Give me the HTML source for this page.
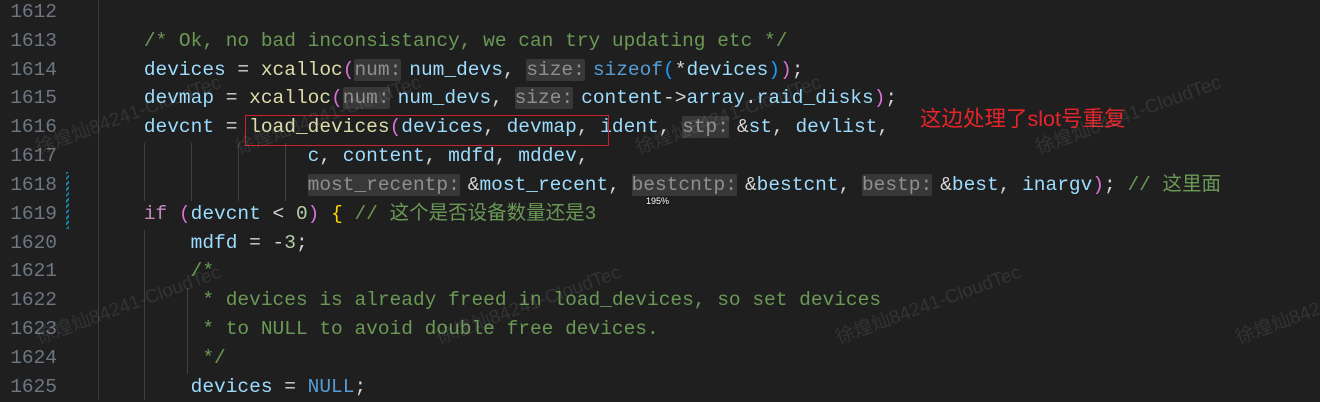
<!DOCTYPE html>
<html><head><meta charset="utf-8"><style>
body{margin:0;width:1320px;height:400px;background:#1f1f1f;overflow:hidden;position:relative;font-family:"Liberation Mono","Noto Sans CJK SC",monospace;}
.ln{position:absolute;left:0;width:57px;text-align:right;color:#6e7681;font-size:19.5px;height:29px;line-height:29px;}
.c{position:absolute;left:97px;font-size:19.5px;height:29px;line-height:29px;white-space:pre;color:#d4d4d4;}
.v{color:#9cdcfe}.f{color:#dcdcaa}.cm{color:#6a9955}.k{color:#569cd6}.kc{color:#c586c0}.n{color:#b5cea8}
.p1{color:#da70d6}.p2{color:#179fff}.p3{color:#ffd700}
.h{background:#383838;color:#8f8f8f;font-size:19.5px;margin-right:8px;border-radius:2px}
.g{position:absolute;width:1px;background:#404040}
.wm{position:absolute;color:rgba(255,255,255,0.09);font-family:"Liberation Sans","Noto Sans CJK SC",sans-serif;font-size:19px;transform:rotate(-20deg);white-space:nowrap}
</style></head><body>
<div class="g" style="left:98px;top:0;height:400px;background:#3a3a3a"></div>
<div class="g" style="left:144px;top:143px;height:58px"></div>
<div class="g" style="left:191px;top:143px;height:58px"></div>
<div class="g" style="left:238px;top:143px;height:58px"></div>
<div class="g" style="left:285px;top:143px;height:58px"></div>
<div class="g" style="left:144px;top:230px;height:170px"></div>
<div class="g" style="left:187px;top:288px;height:86px"></div>
<div style="position:absolute;left:66px;top:172px;width:3px;height:57px;background:repeating-linear-gradient(135deg,#1b81a8 0 2px,#1f1f1f 2px 4px)"></div>

<div class="ln" style="top:-2px">1612</div>
<div class="ln" style="top:27px">1613</div>
<div class="ln" style="top:56px">1614</div>
<div class="ln" style="top:84px">1615</div>
<div class="ln" style="top:113px">1616</div>
<div class="ln" style="top:142px">1617</div>
<div class="ln" style="top:171px">1618</div>
<div class="ln" style="top:200px">1619</div>
<div class="ln" style="top:229px">1620</div>
<div class="ln" style="top:257px">1621</div>
<div class="ln" style="top:286px">1622</div>
<div class="ln" style="top:315px">1623</div>
<div class="ln" style="top:344px">1624</div>
<div class="ln" style="top:373px">1625</div>

<div class="c" style="top:27px">    <span class="cm">/* Ok, no bad inconsistancy, we can try updating etc */</span></div>
<div class="c" style="top:56px">    <span class="v">devices</span> = <span class="f">xcalloc</span><span class="p1">(</span><span class="h">num:</span><span class="v">num_devs</span>, <span class="h">size:</span><span class="k">sizeof</span><span class="p2">(</span>*<span class="v">devices</span><span class="p2">)</span><span class="p1">)</span>;</div>
<div class="c" style="top:84px">    <span class="v">devmap</span> = <span class="f">xcalloc</span><span class="p1">(</span><span class="h">num:</span><span class="v">num_devs</span>, <span class="h">size:</span><span class="v">content</span>-&gt;<span class="v">array</span>.<span class="v">raid_disks</span><span class="p1">)</span>;</div>
<div class="c" style="top:113px">    <span class="v">devcnt</span> = <span class="f">load_devices</span><span class="p1">(</span><span class="v">devices</span>, <span class="v">devmap</span>, <span class="v">ident</span>, <span class="h">stp:</span>&amp;<span class="v">st</span>, <span class="v">devlist</span>,</div>
<div class="c" style="top:142px">                  <span class="v">c</span>, <span class="v">content</span>, <span class="v">mdfd</span>, <span class="v">mddev</span>,</div>
<div class="c" style="top:171px">                  <span class="h">most_recentp:</span>&amp;<span class="v">most_recent</span>, <span class="h">bestcntp:</span>&amp;<span class="v">bestcnt</span>, <span class="h">bestp:</span>&amp;<span class="v">best</span>, <span class="v">inargv</span><span class="p1">)</span>; <span class="cm">// 这里面</span></div>
<div class="c" style="top:200px">    <span class="kc">if</span> <span class="p1">(</span><span class="v">devcnt</span> &lt; <span class="n">0</span><span class="p1">)</span> <span class="p3">{</span> <span class="cm">// 这个是否设备数量还是3</span></div>
<div class="c" style="top:229px">        <span class="v">mdfd</span> = -<span class="n">3</span>;</div>
<div class="c" style="top:257px">        <span class="cm">/*</span></div>
<div class="c" style="top:286px">         <span class="cm">* devices is already freed in load_devices, so set devices</span></div>
<div class="c" style="top:315px">         <span class="cm">* to NULL to avoid double free devices.</span></div>
<div class="c" style="top:344px">         <span class="cm">*/</span></div>
<div class="c" style="top:373px">        <span class="v">devices</span> = <span class="k">NULL</span>;</div>

<div style="position:absolute;left:245px;top:115px;width:362px;height:29px;border:1px solid #c8232a"></div>
<div style="position:absolute;left:920px;top:102px;color:#e5242b;font-family:'Liberation Sans','Noto Sans CJK SC',sans-serif;font-size:21.5px;">这边处理了slot号重复</div>
<div style="position:absolute;left:646px;top:196px;color:#fff;font-family:'Liberation Sans',sans-serif;font-size:9px;background:#1a1a1a">195%</div>

<div class="wm" style="left:30px;top:100px">徐煌灿84241-CloudTec</div>
<div class="wm" style="left:230px;top:100px">徐煌灿84241-CloudTec</div>
<div class="wm" style="left:630px;top:100px">徐煌灿84241-CloudTec</div>
<div class="wm" style="left:1030px;top:100px">徐煌灿84241-CloudTec</div>
<div class="wm" style="left:30px;top:290px">徐煌灿84241-CloudTec</div>
<div class="wm" style="left:430px;top:290px">徐煌灿84241-CloudTec</div>
<div class="wm" style="left:830px;top:290px">徐煌灿84241-CloudTec</div>
<div class="wm" style="left:1230px;top:290px">徐煌灿84241-CloudTec</div>
</body></html>
